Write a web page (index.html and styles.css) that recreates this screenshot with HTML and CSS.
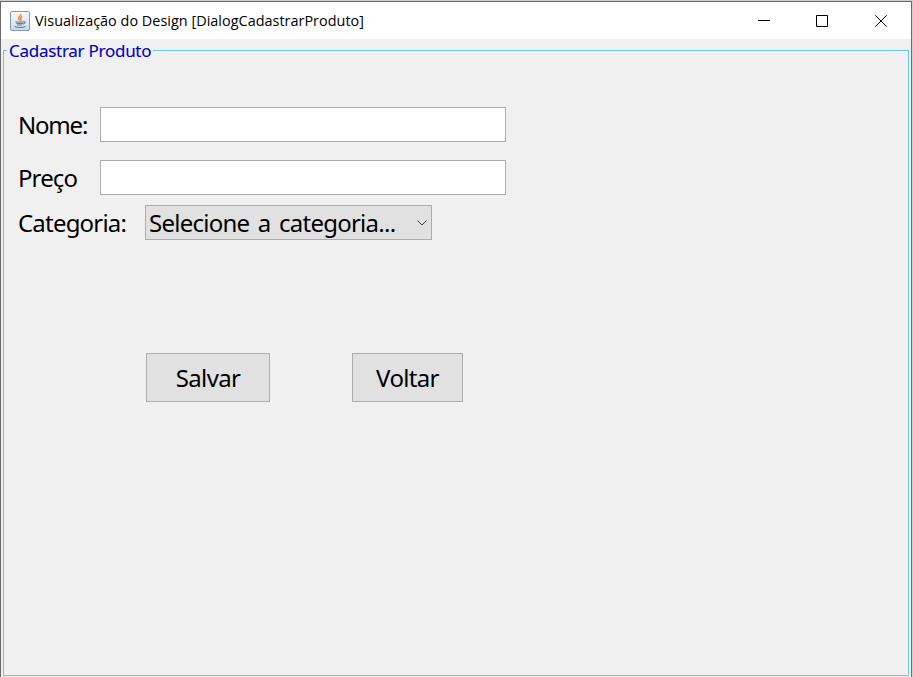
FILE: index.html
```html
<!DOCTYPE html>
<html lang="pt-BR">
<head>
<meta charset="utf-8">
<title>Visualização do Design [DialogCadastrarProduto]</title>
<link rel="stylesheet" href="styles.css">
</head>
<body>
<div class="window">
  <header class="titlebar">
    <svg class="app-icon" width="20" height="20" viewBox="0 0 20 20">
      <defs><linearGradient id="tile" x1="0" y1="0" x2="0" y2="1"><stop offset="0" stop-color="#fafbfc"/><stop offset="1" stop-color="#ccd9e3"/></linearGradient></defs>
      <rect x=".5" y=".5" width="19" height="19" rx="1.5" fill="url(#tile)" stroke="#8499ad"/>
      <path d="M10.700 3c.6 2-2.700 2.500-2.200 4.300.2.900 1 1.400 1.200 2.200M12.300 5.500c-1.600.8-2.300 1.500-1.400 2.700.4.600.1 1.200-.5 1.600" fill="none" stroke="#e88c42" stroke-width="1.500"/>
      <path d="M5.500 11h8M6.300 12.500h6.500M7 14h5M13.300 10.800c2.400-.7 2.300 1.900-.4 2.300M4.700 15.500c2 1.300 8.600 1.300 10.600 0" fill="none" stroke="#587f9f" stroke-width="1.100"/>
    </svg>
    <span class="title">Visualização do Design [DialogCadastrarProduto]</span>
    <div class="controls">
      <svg width="12" height="12" viewBox="0 0 12 12"><path d="M0 5.500h12"/></svg>
      <svg width="12" height="12" viewBox="0 0 12 12"><path d="M.5.500h11v11H.5z"/></svg>
      <svg width="12" height="12" viewBox="0 0 12 12"><path d="M.3.300l11.400 11.400M11.700.300L.3 11.700"/></svg>
    </div>
  </header>
  <main class="content">
    <fieldset class="panel">
      <legend>Cadastrar Produto</legend>
      <div class="row"><label class="nome" for="nome">Nome:</label><input id="nome" type="text"></div>
      <div class="row"><label class="preco" for="preco">Preço</label><input id="preco" type="text"></div>
      <div class="row row-category"><span class="categoria">Categoria:</span>
        <div class="combo"><span>Selecione a categoria...</span><svg width="10" height="6" viewBox="0 0 10 6"><path d="M.5.500L5 5 9.500.500"/></svg></div>
      </div>
      <div class="actions"><button class="save"><span>Salvar</span></button><button class="back"><span>Voltar</span></button></div>
    </fieldset>
  </main>
</div>
</body>
</html>
```
FILE: styles.css
```css
* { box-sizing: border-box; }
body { margin: 0; background: #d0d0d0; overflow: hidden; }
.window {
  width: 912px; height: 677px; margin-top: 1px;
  border: 1px solid #6b6b6b; border-bottom: 0;
  background: #f0f0f0;
  font-family: "Noto Sans", sans-serif; color: #000;
}
.titlebar { display: flex; align-items: center; height: 37px; padding-left: 9px; background: #fff; }
.title { margin-left: 5px; font: 14.4px/20px "Open Sans", sans-serif; white-space: nowrap; letter-spacing: 0.03px; }
.controls { display: flex; gap: 47px; margin-left: auto; padding-right: 24px; }
.controls svg:first-child { margin-right: -1px; }
.controls svg { fill: none; stroke: #000; stroke-width: 1; }
.content { padding: 0 2px; }
.panel {
  height: 637px; min-width: 0; margin: 0; padding: 45px 0 0 14px;
  border: 1px solid #66c7f5;
  width: 906px;
}
legend {
  height: 23px; margin-left: -11px; padding: 0 2px;
  font-size: 17px; line-height: 23px; letter-spacing: -0.27px; color: #0000c0; white-space: nowrap;
  -webkit-text-stroke: 0.1px #0000c0;
}
.row { display: flex; align-items: center; height: 35px; margin-bottom: 18px; font-size: 24px; line-height: 35px; letter-spacing: -0.8px; }
label { width: 82px; white-space: nowrap; }
.nome { letter-spacing: -1.2px; }
.preco { letter-spacing: -0.9px; }
input { width: 406px; height: 35px; padding: 0 4px; border: 1px solid #abadb3; background: #fff; outline: 0; font: inherit; }
.row-category { margin-top: -8px; }
.categoria { width: 127px; white-space: nowrap; }
.combo {
  display: flex; align-items: center; justify-content: space-between;
  width: 287px; height: 35px; padding: 0 4px 0 3px;
  border: 1px solid #abadb3; background: #e1e1e1; white-space: nowrap; letter-spacing: -0.75px; word-spacing: 3px;
}
.combo svg { fill: none; stroke: #444; stroke-width: 1; }
.actions { display: flex; gap: 82px; margin: 113px 0 0 128px; }
button { height: 49px; padding: 0; border: 1px solid #adadad; background: #e1e1e1; font: 24px/35px "Noto Sans", sans-serif; letter-spacing: -0.65px; color: #000; }
.save { width: 124px; }
.back { width: 111px; }
```
